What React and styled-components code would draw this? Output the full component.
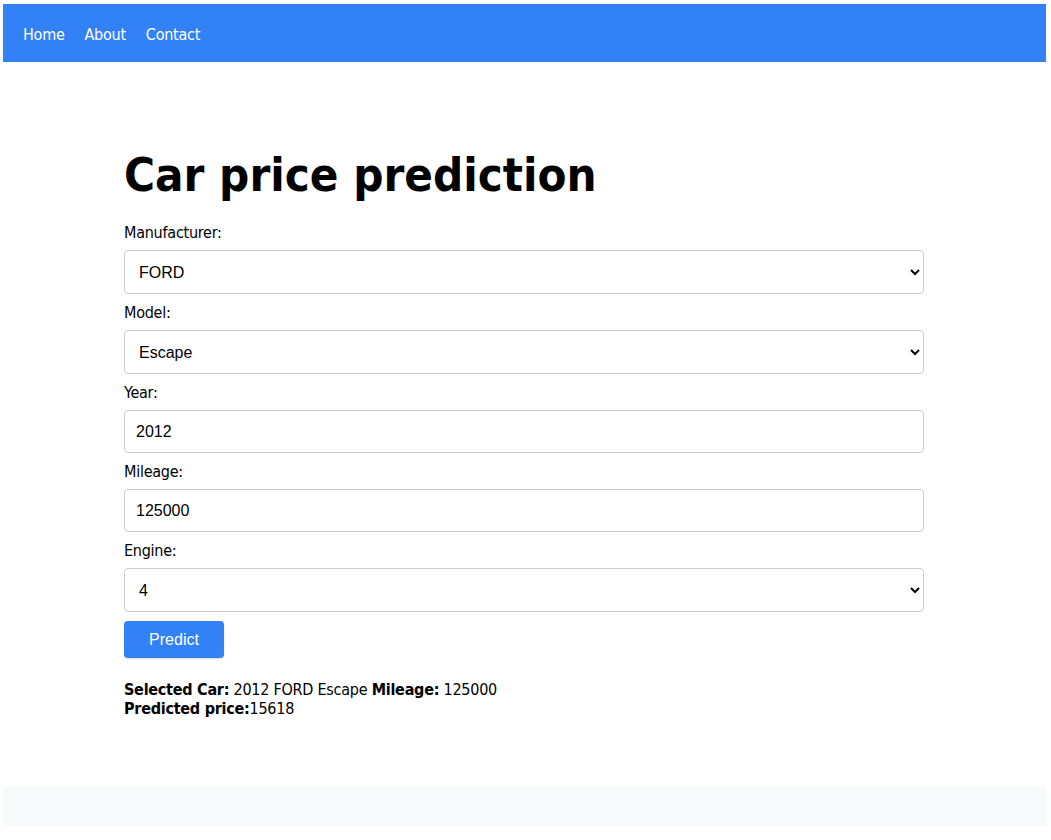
import React, { useState } from "react";
import styled, { createGlobalStyle } from "styled-components";

const GlobalStyle = createGlobalStyle`
  body {
    margin: 0;
    padding: 4px 5px 0 3px;
    background: #ffffff;
    font-family: "DejaVu Sans Condensed", "DejaVu Sans", sans-serif;
    font-size: 16px;
    letter-spacing: -0.25px;
    color: #000;
  }
`;

const Nav = styled.nav`
  display: flex;
  align-items: center;
  gap: 20px;
  height: 58px;
  padding: 2px 20px 0;
  box-sizing: border-box;
  background: #3381f6;
  a {
    color: #fff;
    text-decoration: none;
    font-size: 16px;
  }
`;

const Main = styled.main`
  max-width: 800px;
  margin: 0 auto;
  padding: 84px 1px 69px 0;
`;

const Title = styled.h1`
  margin: 0 0 20px;
  font-size: 47px;
  line-height: 58px;
  font-weight: bold;
  letter-spacing: 0;
`;

const Form = styled.form`
  display: flex;
  flex-direction: column;
`;

const Label = styled.label`
  display: block;
  line-height: 18px;
  margin-bottom: 8px;
`;

const fieldBase = `
  box-sizing: border-box;
  width: 100%;
  margin: 0 0 10px;
  border: 1px solid #cccccc;
  border-radius: 4px;
  background: #fff;
  font-family: "Liberation Sans", Arial, sans-serif;
  font-size: 16px;
  letter-spacing: 0;
  color: #000;
`;

const Select = styled.select`
  ${fieldBase}
  height: 44px;
  padding: 0 10px;
`;

const Input = styled.input`
  ${fieldBase}
  height: 43px;
  padding: 0 11px;
  outline: none;
`;

const Button = styled.button`
  align-self: flex-start;
  width: 100px;
  height: 37px;
  margin-top: -1px;
  border: none;
  border-radius: 4px;
  background: #3381f6;
  color: #fff;
  font-family: "Liberation Sans", Arial, sans-serif;
  font-size: 16px;
  letter-spacing: 0;
  box-shadow: 0 1px 2px rgba(0, 0, 0, 0.15);
  cursor: pointer;
`;

const Result = styled.div`
  margin-top: 22px;
  line-height: 19px;
  b {
    font-weight: bold;
  }
`;

const Footer = styled.footer`
  height: 39px;
  background: #f8f9fa;
`;

export default function App() {
  const [manufacturer, setManufacturer] = useState("FORD");
  const [model, setModel] = useState("Escape");
  const [year, setYear] = useState("2012");
  const [mileage, setMileage] = useState("125000");
  const [engine, setEngine] = useState("4");

  return (
    <>
      <GlobalStyle />
      <Nav>
        <a href="#">Home</a>
        <a href="#">About</a>
        <a href="#">Contact</a>
      </Nav>
      <Main>
        <Title>Car price prediction</Title>
        <Form onSubmit={(e) => e.preventDefault()}>
          <Label>Manufacturer:</Label>
          <Select value={manufacturer} onChange={(e) => setManufacturer(e.target.value)}>
            <option>FORD</option>
            <option>TOYOTA</option>
            <option>HONDA</option>
          </Select>
          <Label>Model:</Label>
          <Select value={model} onChange={(e) => setModel(e.target.value)}>
            <option>Escape</option>
            <option>Focus</option>
            <option>Fusion</option>
          </Select>
          <Label>Year:</Label>
          <Input value={year} onChange={(e) => setYear(e.target.value)} />
          <Label>Mileage:</Label>
          <Input value={mileage} onChange={(e) => setMileage(e.target.value)} />
          <Label>Engine:</Label>
          <Select value={engine} onChange={(e) => setEngine(e.target.value)}>
            <option>4</option>
            <option>6</option>
            <option>8</option>
          </Select>
          <Button type="submit">Predict</Button>
        </Form>
        <Result>
          <b>Selected Car:</b> {year} {manufacturer} {model} <b>Mileage:</b> {mileage}
          <br />
          <b>Predicted price:</b>15618
        </Result>
      </Main>
      <Footer />
    </>
  );
}
